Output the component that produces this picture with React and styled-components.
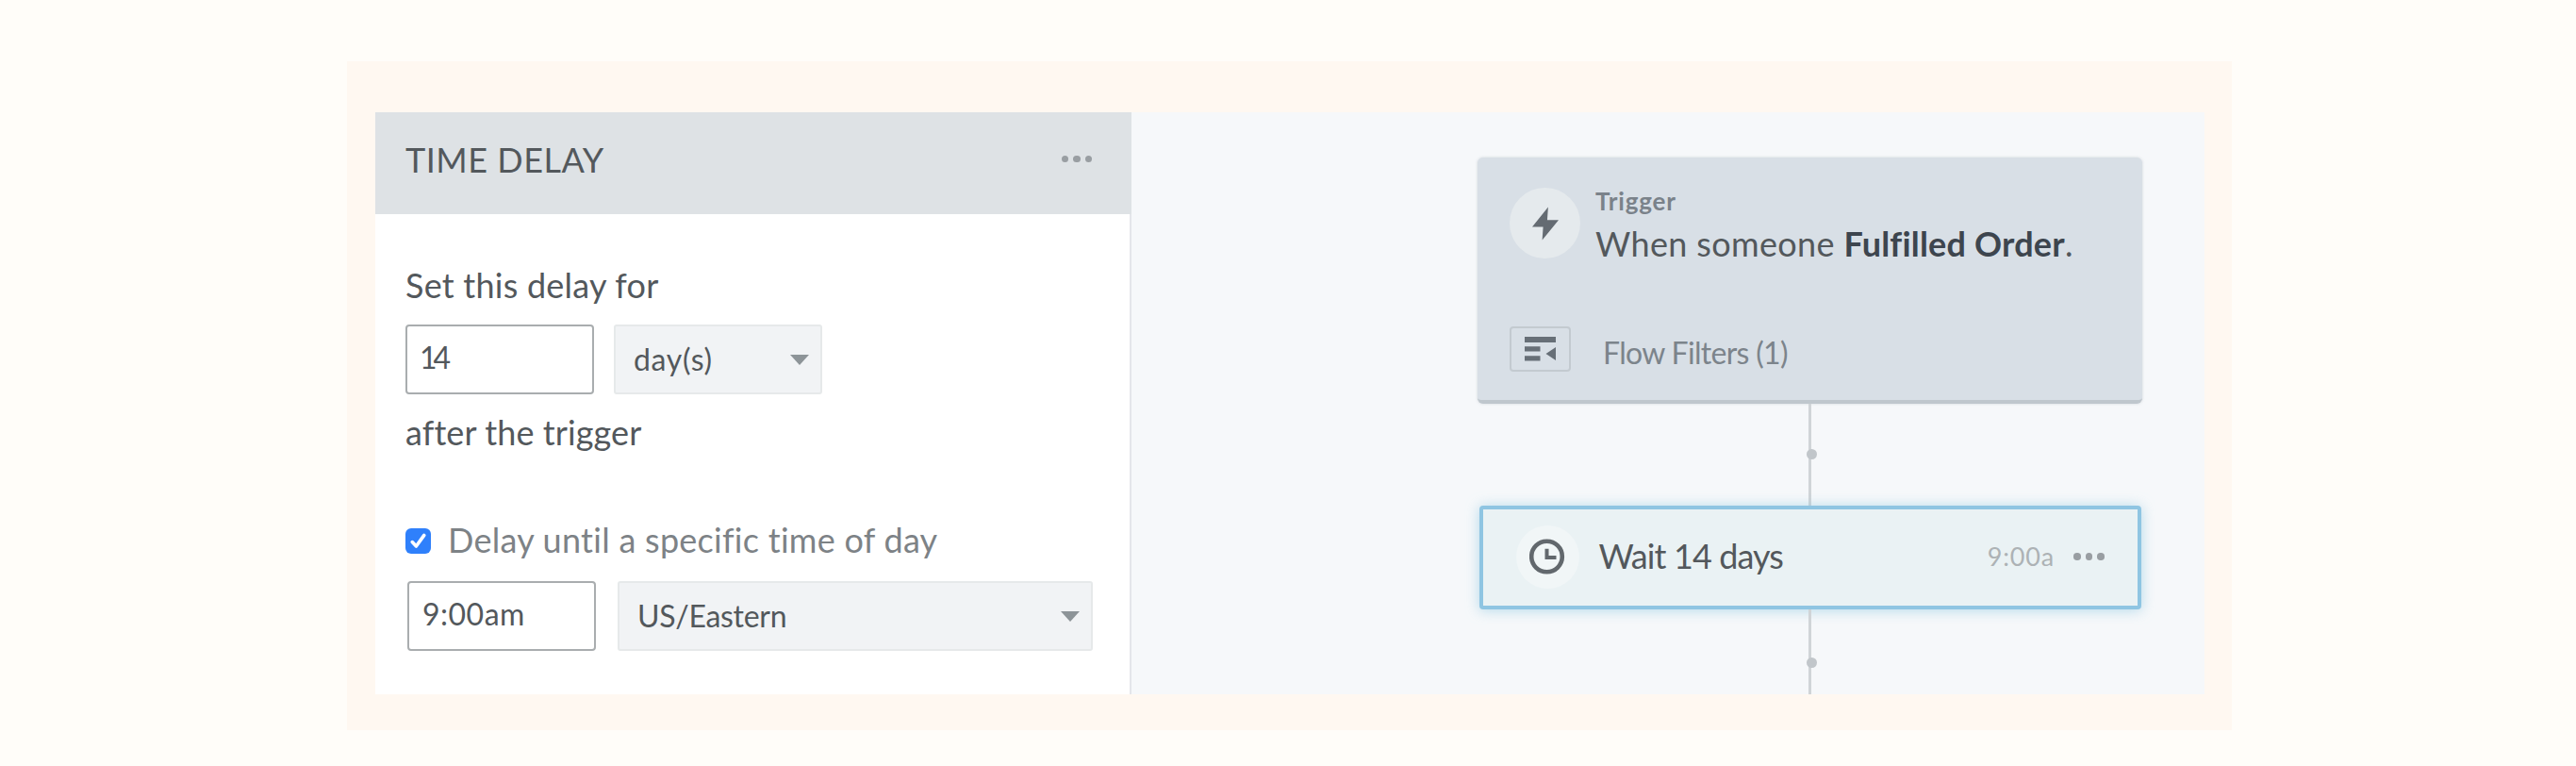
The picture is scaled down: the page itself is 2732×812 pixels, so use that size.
import React from 'react';
import styled, { createGlobalStyle } from 'styled-components';

const GlobalStyle = createGlobalStyle`
  *, *::before, *::after { box-sizing: border-box; }
  body { margin: 0; background: #fffdf9; font-family: Lato, "Liberation Sans", sans-serif; }
`;

const Page = styled.main`
  min-height: 812px;
  padding: 65px 365px 0 368px;
  background: #fffdf9;
`;

const Frame = styled.section`
  display: flex;
  height: 709px;
  padding: 54px 29px 38px 30px;
  background: #fff8f1;
`;

const Panel = styled.aside`
  flex: 0 0 802px;
  display: flex;
  flex-direction: column;
  background: #fff;
`;

const PanelHeader = styled.header`
  height: 108px;
  padding: 0 42px 9px 32px;
  display: flex;
  align-items: center;
  justify-content: space-between;
  background: #dee2e5;
`;

const PanelBody = styled.div`
  flex: 1;
  padding: 53px 0 0 32px;
  border-right: 2px solid #e4e6ea;
`;

const Text = styled.span`
  display: block;
  white-space: nowrap;
  font-size: ${(p) => p.$size || 36}px;
  line-height: ${(p) => p.$line || 44}px;
  letter-spacing: ${(p) => p.$track || 0}px;
  font-weight: ${(p) => p.$weight || 400};
  color: ${(p) => p.$color || '#53585c'};
`;

const AfterLabel = styled(Text)`
  margin-top: 18px;
`;

const FieldRow = styled.div`
  display: flex;
  gap: ${(p) => p.$gap}px;
  margin-top: ${(p) => p.$top}px;
  padding-left: ${(p) => p.$indent || 0}px;
`;

const InputBox = styled.div`
  width: 200px;
  height: 74px;
  padding: 0 12px 4px ${(p) => p.$pad}px;
  display: flex;
  align-items: center;
  background: #fff;
  border: 2px solid #a9adaf;
  border-radius: 4px;
`;

const SelectBox = styled.div`
  width: ${(p) => p.$width}px;
  height: 74px;
  padding: 0 12px 0 19px;
  display: flex;
  align-items: center;
  justify-content: space-between;
  background: #f1f3f5;
  border: 2px solid #e6e9ea;
  border-radius: 3px;
`;

const CheckRow = styled.label`
  display: flex;
  align-items: center;
  gap: 18px;
  margin-top: 70px;
`;

const CheckMark = styled.svg`
  display: block;
  margin-top: 3px;
`;

const DotsRow = styled.span`
  display: flex;
  gap: 5px;
`;

const Dot = styled.i`
  width: 7.5px;
  height: 7.5px;
  border-radius: 50%;
  background: #999ea2;
`;

const FlowCanvas = styled.div`
  flex: 1;
  padding: 48px 0 0 367px;
  background: #f6f8fa;
`;

const TriggerCard = styled.article`
  width: 705px;
  height: 261px;
  padding: 32px 34px;
  background: #d8dfe6;
  border-bottom: 4px solid #bfc7cd;
  border-radius: 6px;
  box-shadow: 0 0 3px rgba(150, 162, 172, 0.4);
`;

const TriggerHead = styled.div`
  display: flex;
  gap: 16px;
  height: 75px;
`;

const IconCircle = styled.span`
  flex: none;
  display: flex;
  align-items: center;
  justify-content: center;
  width: ${(p) => p.$size}px;
  height: ${(p) => p.$size}px;
  border-radius: 50%;
  background: ${(p) => p.$fill};
`;

const TriggerCopy = styled.div`
  display: flex;
  flex-direction: column;
  gap: 7px;
  margin-top: -2px;
`;

const EventName = styled.b`
  font-weight: 700;
  letter-spacing: 0.2px;
  color: #3d454e;
`;

const FilterRow = styled.div`
  display: flex;
  align-items: flex-start;
  gap: 34px;
  margin-top: 71.5px;
`;

const FilterButton = styled.span`
  display: flex;
  align-items: center;
  justify-content: center;
  width: 65px;
  height: 48px;
  border: 2px solid #c3cad0;
  border-radius: 4px;
`;

const FilterText = styled(Text)`
  margin-top: 6px;
`;

const Connector = styled.div`
  position: relative;
  width: 3px;
  height: ${(p) => p.$height}px;
  margin-left: 351px;
  background: #d0d4d7;

  &::after {
    content: '';
    position: absolute;
    left: -2px;
    top: ${(p) => p.$dot}px;
    width: 11px;
    height: 11px;
    border-radius: 50%;
    background: #c1c6ca;
  }
`;

const WaitCard = styled.article`
  position: relative;
  width: 702px;
  height: 110px;
  margin-left: 1.5px;
  padding: 0 35px 2px 35px;
  display: flex;
  align-items: center;
  background: #eaf2f4;
  border: 4.5px solid #8fc5e2;
  border-radius: 4px;
  box-shadow: 0 1px 14px rgba(143, 200, 226, 0.65);
`;

const WaitLabel = styled(Text)`
  flex: 1;
  margin: 0 0 3px 21px;
`;

const WaitTime = styled(Text)`
  margin-right: 20px;
`;

function Dots() {
  return (
    <DotsRow>
      <Dot />
      <Dot />
      <Dot />
    </DotsRow>
  );
}

function Caret() {
  return (
    <svg width="20" height="11" viewBox="0 0 20 11">
      <path d="M0 0H20L10 11Z" fill="#8d9498" />
    </svg>
  );
}

export default function App() {
  return (
    <>
      <GlobalStyle />
      <Page>
        <Frame>
          <Panel>
            <PanelHeader>
              <Text $track={0.5}>TIME DELAY</Text>
              <Dots />
            </PanelHeader>
            <PanelBody>
              <Text $track={0.23}>Set this delay for</Text>
              <FieldRow $gap={21} $top={20}>
                <InputBox $pad={13}>
                  <Text $size={32} $track={-4}>14</Text>
                </InputBox>
                <SelectBox $width={221}>
                  <Text $size={32} $track={0.7}>day(s)</Text>
                  <Caret />
                </SelectBox>
              </FieldRow>
              <AfterLabel $track={0.1}>after the trigger</AfterLabel>
              <CheckRow>
                <CheckMark width="27" height="27" viewBox="0 0 27 27">
                  <rect width="27" height="27" rx="6" fill="#2f80fb" />
                  <path d="M7.2 14.6L11.4 19L19.8 7.4" fill="none" stroke="#fff" strokeWidth="3.6" strokeLinecap="round" strokeLinejoin="round" />
                </CheckMark>
                <Text $track={0.27} $color="#7d8286">Delay until a specific time of day</Text>
              </CheckRow>
              <FieldRow $gap={23} $top={22} $indent={2}>
                <InputBox $pad={14}>
                  <Text $size={32} $track={0.5}>9:00am</Text>
                </InputBox>
                <SelectBox $width={504}>
                  <Text $size={32} $track={-0.3}>US/Eastern</Text>
                  <Caret />
                </SelectBox>
              </FieldRow>
            </PanelBody>
          </Panel>
          <FlowCanvas>
            <TriggerCard>
              <TriggerHead>
                <IconCircle $size={75} $fill="#e5eaed">
                  <svg width="28" height="36" viewBox="0 0 29 36">
                    <path d="M17.5 0L0 21.5H12L11 36L29 14H16.5Z" fill="#646b72" />
                  </svg>
                </IconCircle>
                <TriggerCopy>
                  <Text $size={26} $line={32} $weight={700} $track={0.8} $color="#7a828a">Trigger</Text>
                  <Text $track={0.35}>
                    When someone <EventName>Fulfilled Order</EventName>.
                  </Text>
                </TriggerCopy>
              </TriggerHead>
              <FilterRow>
                <FilterButton>
                  <svg width="33" height="26" viewBox="0 0 33 26">
                    <path d="M0 0H33V6H0ZM0 10.3H16.5V15.6H0ZM0 20.3H16.5V25.6H0ZM33 11V25L22.5 18Z" fill="#676f77" />
                  </svg>
                </FilterButton>
                <FilterText $size={32} $track={-0.68} $color="#7c848b">Flow Filters (1)</FilterText>
              </FilterRow>
            </TriggerCard>
            <Connector $height={108} $dot={47.5} />
            <WaitCard>
              <IconCircle $size={67} $fill="#f1f6f7">
                <svg width="38" height="38" viewBox="0 0 38 38">
                  <circle cx="18.5" cy="19" r="16.3" fill="none" stroke="#62686d" strokeWidth="4.6" />
                  <path d="M18.5 10.8V20H28.5" fill="none" stroke="#62686d" strokeWidth="4" />
                </svg>
              </IconCircle>
              <WaitLabel $track={-0.9}>Wait 14 days</WaitLabel>
              <WaitTime $size={27} $track={0.8} $color="#adb2b5">9:00a</WaitTime>
              <Dots />
            </WaitCard>
            <Connector $height={90} $dot={50.5} />
          </FlowCanvas>
        </Frame>
      </Page>
    </>
  );
}
